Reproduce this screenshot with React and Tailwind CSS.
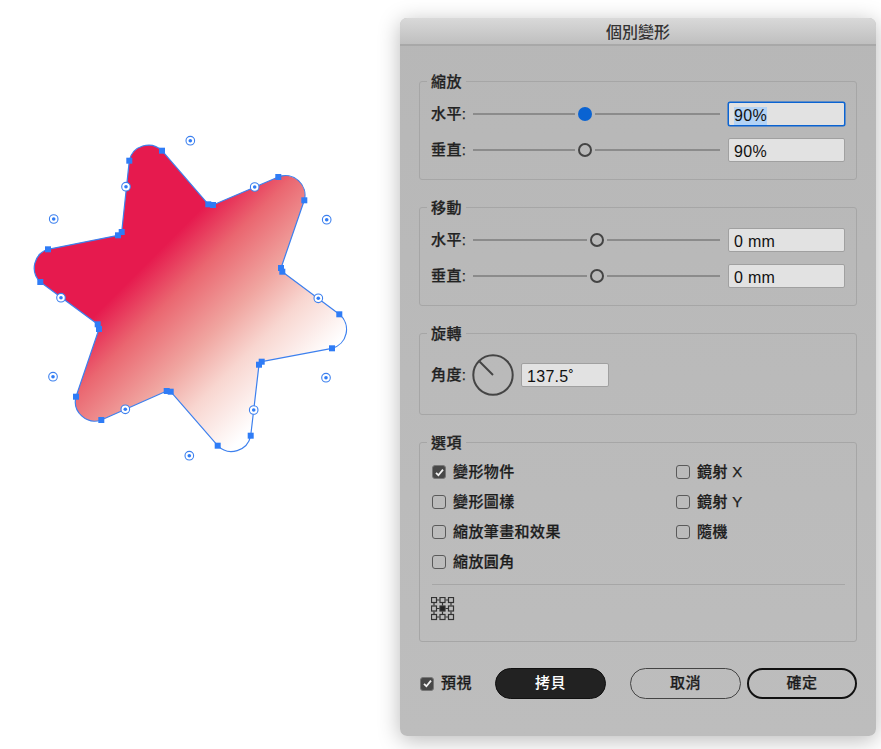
const squares = [[129.3,160.7],[162,150.7],[208.3,204.3],[213,205],[278.3,177],[304.3,200.3],[281,268],[282.3,271.7],[339.3,314.3],[332,348.3],[261.7,361.7],[259,364.7],[250.7,435.7],[217.7,445.7],[170.7,391.7],[166.7,391],[101.3,420],[76,396.7],[99,329],[97.7,324.3],[40.3,282],[48,249.3],[118,235.3],[121.7,232]];
const circles = [[190.3,140.7],[53.7,219],[126,186.7],[61,297.7],[254.7,187],[326.7,219.7],[318.3,298.3],[253.7,410],[326,377.7],[189.3,455.7],[53,376.7],[125.3,409.3]];
const starPath = "M129.3 160.7 A19.5 19.5 0 0 1 162 150.7 L208.3 204.3 Q210 206 213 205 L278.3 177 A19.5 19.5 0 0 1 304.3 200.3 L281 268 Q280.5 270 282.3 271.7 L339.3 314.3 A19.5 19.5 0 0 1 332 348.3 L261.7 361.7 Q259.5 362 259 364.7 L250.7 435.7 A19.5 19.5 0 0 1 217.7 445.7 L170.7 391.7 Q169 390 166.7 391 L101.3 420 A19.5 19.5 0 0 1 76 396.7 L99 329 Q99.5 326.5 97.7 324.3 L40.3 282 A19.5 19.5 0 0 1 48 249.3 L118 235.3 Q121 235 121.7 232 Z";

function Star() {
  return (
    <svg width="400" height="749" viewBox="0 0 400 749" className="shrink-0 block">
      <defs>
        <linearGradient id="g" gradientUnits="userSpaceOnUse" x1="205" y1="205" x2="340" y2="340">
          <stop offset="0" stopColor="#e61a4e" />
          <stop offset="0.22" stopColor="#ea6670" />
          <stop offset="0.5" stopColor="#f0a5a0" />
          <stop offset="0.71" stopColor="#f8d6d0" />
          <stop offset="1" stopColor="#ffffff" />
        </linearGradient>
      </defs>
      <path d={starPath} fill="url(#g)" stroke="#3d80ee" strokeWidth="1.2" />
      {squares.map(([x, y], i) => (
        <rect key={i} x={x - 3} y={y - 3} width="6" height="6" fill="#2f7cf6" />
      ))}
      {circles.map(([x, y], i) => (
        <g key={i}>
          <circle cx={x} cy={y} r="4.3" fill="#fff" stroke="#3d80ee" strokeWidth="1.1" />
          <circle cx={x} cy={y} r="1.8" fill="#2f7cf6" />
        </g>
      ))}
    </svg>
  );
}

function Group({ title, className, children }) {
  return (
    <fieldset className={"border border-[#a6a6a6] rounded-[3px] px-[11px] " + className}>
      <legend className="-ml-1 px-1 pt-px h-[18px] leading-[18px] text-[15px] tracking-[0.4px] font-medium text-[#222] [-webkit-text-stroke:0.25px_#222]">{title}</legend>
      {children}
    </fieldset>
  );
}

function Slider({ left, focused }) {
  return (
    <div className="flex items-center w-[247px] shrink-0">
      <div className="h-[2px] bg-[#8b8b8b]" style={{ width: left }} />
      {focused ? (
        <div className="mx-[3px] w-[14px] h-[14px] rounded-full bg-[#0a63d2] shrink-0" />
      ) : (
        <div className="mx-[3px] w-[14px] h-[14px] rounded-full border-2 border-[#444] shrink-0" />
      )}
      <div className="h-[2px] bg-[#8b8b8b] flex-1" />
    </div>
  );
}

function Field({ value, focused, w = "w-[117px]" }) {
  return (
    <div className={w + " h-[24px] rounded-[2px] bg-[#e2e2e2] pl-[5px] pt-[3px] flex items-center text-[16px] tracking-[0.3px] text-[#111] border " + (focused ? "border-[#0a63d2] shadow-[0_0_0_0.5px_#0a63d2]" : "border-[#a0a0a0]")}>
      <span className={focused ? "bg-[#b3d3f6] leading-[18px]" : "leading-[18px]"}>{value}</span>
    </div>
  );
}

function SliderRow({ label, left, value, focused }) {
  return (
    <div className="flex items-center h-6">
      <div className="w-[42px] shrink-0 text-[15px] tracking-[0.4px] font-medium text-[#222] [-webkit-text-stroke:0.25px_#222] whitespace-nowrap">{label}</div>
      <Slider left={left} focused={focused} />
      <div className="ml-2">
        <Field value={value} focused={focused} />
      </div>
    </div>
  );
}

function Box({ checked }) {
  return checked ? (
    <div className="w-[14px] h-[14px] rounded-[3px] bg-[#484848] border border-[#777] flex items-center justify-center shrink-0">
      <svg width="11" height="11" viewBox="0 0 11 11" fill="none">
        <path d="M2 5.8 L4.4 8.2 L9 2.6" stroke="#f2f2f2" strokeWidth="1.8" />
      </svg>
    </div>
  ) : (
    <div className="w-[14px] h-[14px] rounded-[3px] border-[1.5px] border-[#5a5a5a] shrink-0" />
  );
}

function Check({ label, checked }) {
  return (
    <div className="flex items-center h-[30px] pl-px gap-[7px] text-[15px] tracking-[0.4px] font-medium text-[#1c1c1c] [-webkit-text-stroke:0.25px_#1c1c1c] whitespace-nowrap">
      <Box checked={checked} />
      <span>{label}</span>
    </div>
  );
}

function RefPoint() {
  const p = [3, 11.5, 20];
  return (
    <svg width="24" height="24" viewBox="0 0 24 24" fill="none" className="block">
      <path d="M6 3H8.500M14.500 3H17M6 11.500H8.500M14.500 11.500H17M6 20H8.500M14.500 20H17M3 6V8.500M3 14.500V17M11.500 6V8.500M11.500 14.500V17M20 6V8.500M20 14.500V17" stroke="#333" strokeWidth="1.2" />
      {p.map((y) =>
        p.map((x) => (
          <rect
            key={x + "-" + y}
            x={x - 2.5}
            y={y - 2.5}
            width="5"
            height="5"
            fill={x === 11.5 && y === 11.5 ? "#222" : "none"}
            stroke="#333"
            strokeWidth="1.2"
          />
        ))
      )}
    </svg>
  );
}

function Dialog() {
  return (
    <div className="mt-[18px] w-[476px] h-[718px] rounded-[7px] bg-gradient-to-b from-[#b7b7b7] to-[#bdbdbd] shadow-[0_4px_22px_rgba(0,0,0,0.28)] shrink-0 overflow-hidden">
      <div className="h-[28px] pt-1 bg-gradient-to-b from-[#d9d9d9] to-[#bfbfbf] border-b-2 border-[#a8a8a8] flex items-center justify-center text-[16px] text-[#333] font-medium">
        個別變形
      </div>
      <div className="px-[19px] pt-[26px] flex flex-col gap-[18px]">
        <Group title="縮放" className="pt-3 pb-[17px]">
          <div className="flex flex-col gap-3">
            <SliderRow label="水平:" left={102} value="90%" focused />
            <SliderRow label="垂直:" left={102} value="90%" />
          </div>
        </Group>
        <Group title="移動" className="pt-3 pb-[17px]">
          <div className="flex flex-col gap-3">
            <SliderRow label="水平:" left={114} value="0 mm" />
            <SliderRow label="垂直:" left={114} value="0 mm" />
          </div>
        </Group>
        <Group title="旋轉" className="pt-3 pb-[18px]">
          <div className="flex items-center h-[42px]">
            <div className="w-[41px] shrink-0 text-[15px] tracking-[0.4px] font-medium text-[#222] [-webkit-text-stroke:0.25px_#222] whitespace-nowrap">角度:</div>
            <svg width="42" height="42" viewBox="0 0 42 42" fill="none" className="shrink-0">
              <circle cx="21" cy="21" r="19.7" stroke="#444" strokeWidth="2" />
              <path d="M21 21 L7.500 7.500" stroke="#444" strokeWidth="2" />
            </svg>
            <div className="ml-[7px]">
              <Field value="137.5˚" w="w-[88px]" />
            </div>
          </div>
        </Group>
        <Group title="選項" className="pt-[6px] pb-5">
          <div className="flex">
            <div className="w-[244px] shrink-0">
              <Check label="變形物件" checked />
              <Check label="變形圖樣" />
              <Check label="縮放筆畫和效果" />
              <Check label="縮放圓角" />
            </div>
            <div>
              <Check label="鏡射 X" />
              <Check label="鏡射 Y" />
              <Check label="隨機" />
            </div>
          </div>
          <div className="mt-[7px] ml-px h-px bg-[#a6a6a6]" />
          <div className="mt-3">
            <RefPoint />
          </div>
        </Group>
        <div className="flex items-center h-[31px] mt-[8px]">
          <div className="w-[76px] shrink-0 flex items-center gap-[7px] pl-px text-[15px] tracking-[0.4px] font-medium text-[#1c1c1c] [-webkit-text-stroke:0.25px_#1c1c1c]">
            <Box checked />
            <span>預視</span>
          </div>
          <div className="w-[111px] shrink-0 h-[31px] rounded-full bg-[#222] border border-[#111] text-white text-[15px] tracking-[0.4px] font-medium flex items-center justify-center">拷貝</div>
          <div className="ml-6 w-[111px] shrink-0 h-[31px] rounded-full border-[1.5px] border-[#444] text-[#1c1c1c] text-[15px] tracking-[0.4px] font-medium [-webkit-text-stroke:0.25px_#1c1c1c] flex items-center justify-center">取消</div>
          <div className="ml-[6px] w-[110px] shrink-0 h-[31px] rounded-full border-[2.5px] border-[#111] text-[#1c1c1c] text-[15px] tracking-[0.4px] font-medium [-webkit-text-stroke:0.25px_#1c1c1c] flex items-center justify-center">確定</div>
        </div>
      </div>
    </div>
  );
}

export default function App() {
  return (
    <div className="flex w-[881px] h-[749px] overflow-hidden bg-white font-['Liberation_Sans','Noto_Sans_CJK_TC',sans-serif]">
      <Star />
      <Dialog />
    </div>
  );
}
